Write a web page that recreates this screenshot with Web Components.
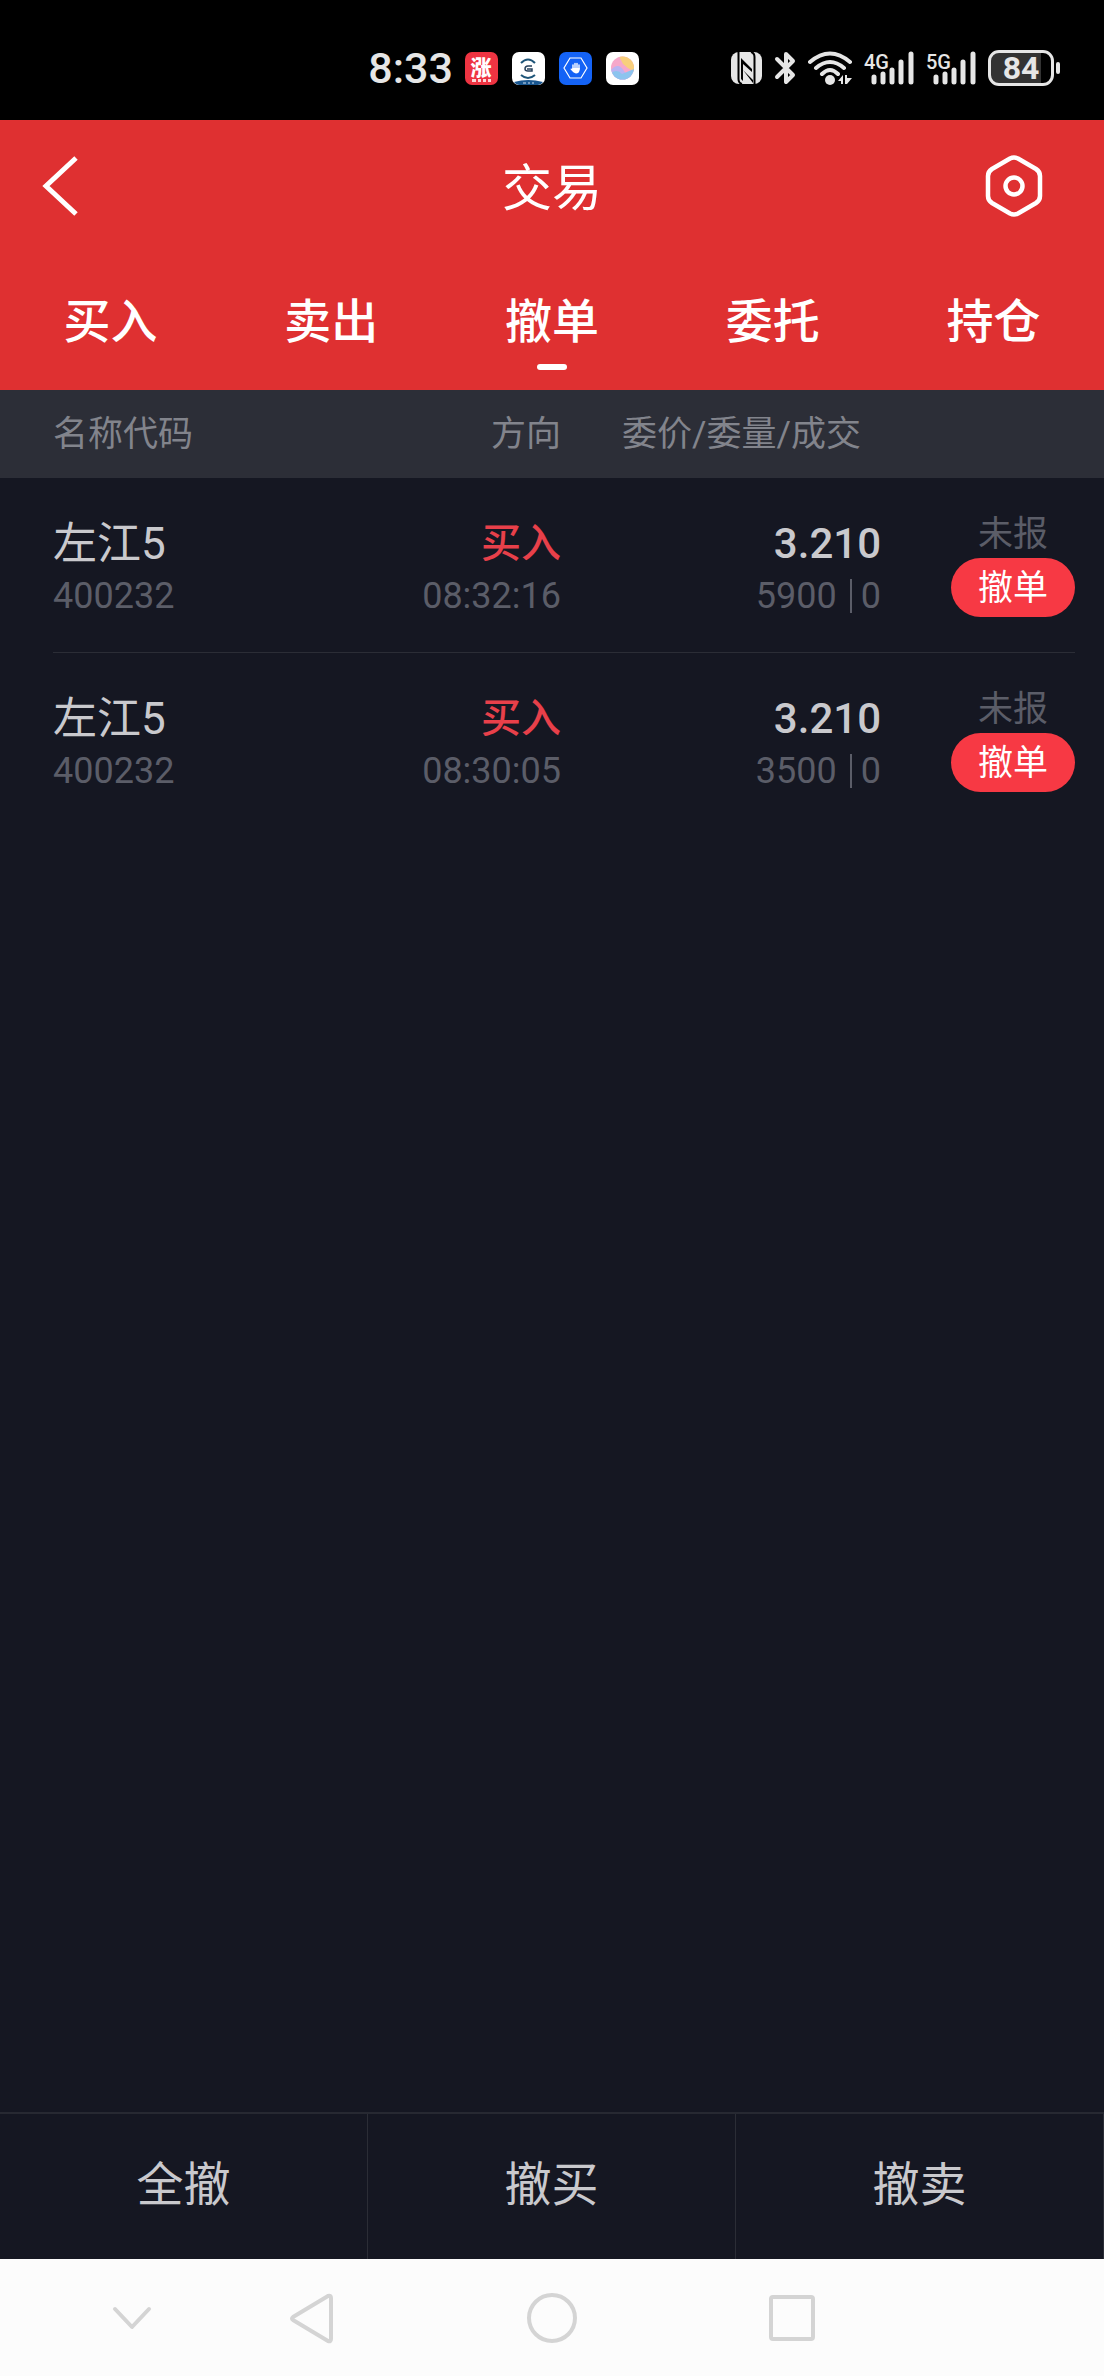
<!DOCTYPE html>
<html lang="zh-CN">
<head>
<meta charset="utf-8">
<meta name="viewport" content="width=device-width, initial-scale=1">
<title>交易</title>
<style>
  body {
    margin: 0;
    font-family: Roboto, "Noto Sans CJK SC", sans-serif;
    background: #151722;
  }
</style>
</head>
<body>
<trade-app></trade-app>

<script>
const define = (name, html, setup) => {
  const template = document.createElement('template')
  template.innerHTML = html
  customElements.define(name, class extends HTMLElement {
    constructor() {
      super()
      this.attachShadow({mode: 'open'}).append(template.content.cloneNode(true))
    }

    connectedCallback() {
      if (setup) setup(this, this.shadowRoot)
    }
  })
}

// Signal strength with the network generation above the short bars
define('signal-bars', `
  <style>
  :host { display: block; width: 50px; height: 36px; }
  svg { display: block; overflow: visible; }
  text { font: 500 20px Roboto, sans-serif; fill: #e6e6e6; }
  </style>
  <svg width="50" height="36" viewBox="0 0 50 36">
    <text x="0" y="19"></text>
    <path d="M10 27V32M19 24V32M28 20V32M37 12V32M47 4V32" stroke="#e6e6e6" stroke-width="5" stroke-linecap="round"/>
  </svg>
`, (host, root) => {
  root.querySelector('text').textContent = host.getAttribute('label')
})

define('status-bar', `
  <style>
  :host {
    display: flex;
    justify-content: flex-end;
    align-items: center;
    height: 120px;
    box-sizing: border-box;
    padding: 16px 44px 0 0;
    background: #000;
    color: #e6e6e6;
  }
  svg { display: block; }
  .left, .right { display: flex; align-items: center; }
  .left { gap: 14px; margin-right: 92px; }
  .right { gap: 12px; }
  .time { font-size: 43px; line-height: 48px; font-weight: 500; margin-right: -2px; }
  .battery { display: flex; align-items: center; gap: 2px; }
  .level {
    width: 66px;
    height: 36px;
    box-sizing: border-box;
    border: 3px solid #e6e6e6;
    border-radius: 11px;
    background: linear-gradient(90deg, #333 84%, #000 84%);
    font-size: 32px;
    line-height: 31px;
    font-weight: 700;
    text-align: center;
  }
  .nub { width: 4px; height: 12px; border-radius: 2px; background: #e6e6e6; }
  </style>
  <div class="left">
    <span class="time">8:33</span>
    <svg width="33" height="33" viewBox="0 0 33 33">
      <rect width="33" height="33" rx="7" fill="#ee3442"/>
      <text x="16" y="23" text-anchor="middle" font-size="21" font-weight="900" font-family="Noto Sans CJK SC, sans-serif" fill="#fff">涨</text>
      <path d="M7 27h4v3H7zM13 27h3v3h-3zM18 27h3v3h-3zM23 27h3v3h-3z" fill="#fff" opacity=".8"/>
    </svg>
    <svg width="33" height="33" viewBox="0 0 33 33">
      <rect width="33" height="33" rx="7" fill="#fff"/>
      <path d="M2 30Q16 26 31 30Q29 33 26 33H7Q4 33 2 30z" fill="#1a5790"/>
      <path d="M9 11Q16 4 23 11M9 23Q16 29 23 23" fill="none" stroke="#1e5579" stroke-width="2"/>
      <path d="M20 14H16Q13 14 13 17Q13 19 16 19H20V17H15" fill="none" stroke="#27415c" stroke-width="1.500"/>
      <path d="M11 31h3M16 31h2M20 31h2" stroke="#cfe0f0" stroke-width="1"/>
    </svg>
    <svg width="33" height="33" viewBox="0 0 33 33">
      <rect width="33" height="33" rx="7" fill="#1463f6"/>
      <path d="M11 6H22L28 16L22 26H11L5 16z" fill="none" stroke="#fff" stroke-width="1.200"/>
      <path d="M14 17V13M16 17V11.500M18 17V11.500M20 17V13" stroke="#fff" stroke-width="1.400" stroke-linecap="round"/>
      <path d="M13.300 16H20.700V18Q20 21.500 17 21.500Q14.500 21 11.300 17Q12 16 13.300 17z" fill="#fff"/>
    </svg>
    <svg width="33" height="33" viewBox="0 0 33 33">
      <defs>
        <clipPath id="ball"><circle cx="16.500" cy="16" r="11.500"/></clipPath>
      </defs>
      <rect width="33" height="33" rx="7" fill="#fff"/>
      <g clip-path="url(#ball)">
        <rect width="33" height="33" fill="#f6a8ca"/>
        <path d="M13 4Q30 2 29 20Q22 17 17 12z" fill="#f8cf7c"/>
        <path d="M4 19Q12 9 18 19T29 21V30H4z" fill="#b9b4f2"/>
        <path d="M4 22Q11 16 16 22L28 17V30H4z" fill="#8cc4ee"/>
      </g>
    </svg>
  </div>
  <div class="right">
    <svg width="31" height="34" viewBox="0 0 31 34">
      <rect y="1" width="31" height="32" rx="8" fill="#e6e6e6"/>
      <path d="M7.500 1V28Q7.500 32 11 33M20 1Q23.500 2 23.500 6V33" fill="none" stroke="#000" stroke-width="2"/>
      <path d="M10 7L21 18V21L12 13V30L10 28zM12 19L22 29V32z" fill="#000"/>
    </svg>
    <svg width="22" height="36" viewBox="0 0 22 36">
      <path d="M3 9L19 25L12 32V4L19 11L3 27" fill="none" stroke="#e6e6e6" stroke-width="4" stroke-linecap="round" stroke-linejoin="round"/>
    </svg>
    <svg width="44" height="36" viewBox="0 0 44 36">
      <path d="M2 12Q22 -5 42 12M8 18Q22 6 36 18M14 24Q22 16 30 24" fill="none" stroke="#e6e6e6" stroke-width="4" stroke-linecap="round"/>
      <circle cx="22" cy="30" r="5" fill="#e6e6e6"/>
      <path d="M30 31L35 25V34H33V31zM37 25H39V28H44L39 34H37z" fill="#e6e6e6"/>
    </svg>
    <signal-bars label="4G"></signal-bars>
    <signal-bars label="5G"></signal-bars>
    <div class="battery"><div class="level">84</div><div class="nub"></div></div>
  </div>
`)

define('page-header', `
  <style>
  :host {
    display: grid;
    grid-template-columns: 120px 1fr 120px;
    align-items: center;
    height: 132px;
    background: #df3031;
    color: #fff;
  }
  h1 { margin: 0; padding-top: 6px; font-size: 50px; line-height: 60px; font-weight: 400; text-align: center; }
  button {
    display: flex;
    justify-content: center;
    width: 120px;
    padding: 0;
    border: 0;
    background: none;
  }
  .settings { justify-self: end; width: 180px; }
  </style>
  <button aria-label="返回">
    <svg width="36" height="60" viewBox="0 0 36 60"><path d="M34 2L4 30L34 58" fill="none" stroke="#fff" stroke-width="5"/></svg>
  </button>
  <h1><slot></slot></h1>
  <button class="settings" aria-label="设置">
    <svg width="58" height="62" viewBox="0 0 58 62">
      <path d="M25 3.500Q29 1.500 33 3.500L51 14Q55 16.500 55 21V41Q55 45.500 51 48L33 58.500Q29 60.500 25 58.500L7 48Q3 45.500 3 41V21Q3 16.500 7 14z" fill="none" stroke="#fff" stroke-width="4.500"/>
      <circle cx="29" cy="31" r="8.500" fill="none" stroke="#fff" stroke-width="4.500"/>
    </svg>
  </button>
`)

define('trade-tab', `
  <style>
  :host { display: block; flex: 1; }
  button {
    display: flex;
    flex-direction: column;
    align-items: center;
    gap: 14px;
    width: 100%;
    padding: 0;
    border: 0;
    background: none;
    color: #fff;
    font: 500 47px/56px Roboto, "Noto Sans CJK SC", sans-serif;
  }
  button::after { content: ""; width: 30px; height: 6px; border-radius: 3px; }
  :host([current]) button::after { background: #fff; }
  </style>
  <button role="tab"><slot></slot></button>
`, (host, root) => {
  root.querySelector('button').setAttribute('aria-selected', host.hasAttribute('current'))
})

define('trade-tabs', `
  <style>
  :host { display: flex; padding: 42px 0 20px; background: #df3031; }
  </style>
  <slot></slot>
`)

define('order-table', `
  <style>
  :host { display: block; flex: 1; }
  table, thead, tbody { display: block; }
  tr { display: grid; grid-template-columns: 1fr 1fr 320px 194px; }
  th, td { padding: 0; font-weight: 400; text-align: right; }
  th:first-child, td:first-child { text-align: left; }
  thead { padding: 2px 29px 0 53px; background: #2c2e37; color: #82848c; }
  th { font-size: 35px; line-height: 86px; }
  th:nth-child(3) { padding-right: 20px; }
  tbody { margin: 0 29px 0 53px; }
  tbody tr { padding: 40px 0 30px; color: #c9c9cd; }
  tbody tr + tr { border-top: 1px solid #2b2d36; }
  td div { line-height: 52px; }
  .name { font-size: 44px; }
  .side { font-size: 40px; font-weight: 500; color: #e8404a; }
  .price { font-size: 42px; font-weight: 500; }
  .sub { font-size: 36px; color: #5b5d68; }
  .volume { display: flex; justify-content: flex-end; align-items: center; }
  .volume i { width: 2px; height: 34px; margin: 0 9px 0 13px; background: #5b5d68; }
  .action { display: flex; flex-direction: column; align-items: flex-end; gap: 6px; }
  .action div { width: 124px; font-size: 35px; line-height: 34px; text-align: center; color: #5b5d68; }
  .action button {
    width: 124px;
    height: 59px;
    padding: 2px 0 0;
    border: 0;
    border-radius: 30px;
    background: #f73944;
    color: #fff;
    font: 35px/56px Roboto, "Noto Sans CJK SC", sans-serif;
  }
  </style>
  <table>
    <thead><tr><th>名称代码</th><th>方向</th><th>委价/委量/成交</th><th></th></tr></thead>
    <tbody></tbody>
  </table>
`, (host, root) => {
  root.querySelector('tbody').innerHTML = host.orders.map(o => `
    <tr>
      <td><div class="name">${o.name}</div><div class="sub">${o.code}</div></td>
      <td><div class="side">${o.side}</div><div class="sub">${o.time}</div></td>
      <td><div class="price">${o.price}</div><div class="sub volume">${o.amount}<i></i>${o.filled}</div></td>
      <td class="action"><div>${o.state}</div><button>撤单</button></td>
    </tr>`).join('')
})

define('cancel-bar', `
  <style>
  :host { display: flex; border-top: 2px solid #272932; }
  button {
    flex: 1;
    height: 145px;
    padding: 0 0 4px;
    border: 0;
    border-right: 1px solid #2b2d36;
    background: none;
    color: #c9c9cd;
    font: 47px/56px Roboto, "Noto Sans CJK SC", sans-serif;
  }
  </style>
  <button>全撤</button>
  <button>撤买</button>
  <button>撤卖</button>
`)

define('system-nav', `
  <style>
  :host {
    display: grid;
    grid-template-columns: 120px repeat(3, 240px);
    justify-content: center;
    height: 117px;
    padding-right: 120px;
    background: #fcfcfc;
  }
  button { display: flex; justify-content: center; align-items: center; padding: 0; border: 0; background: none; }
  svg { fill: none; stroke: #d4d4d4; stroke-width: 4; stroke-linecap: round; stroke-linejoin: round; }
  </style>
  <button aria-label="收起"><svg width="40" height="52" viewBox="0 0 40 52"><path d="M3 17L20 35L37 17"/></svg></button>
  <button aria-label="后退"><svg width="44" height="52" viewBox="0 0 44 52"><path d="M3 25L38 4Q41 3 41 6V47Q41 50 38 49L3 28Q1 26.500 3 25z"/></svg></button>
  <button aria-label="主屏幕"><svg width="52" height="52" viewBox="0 0 52 52"><circle cx="26" cy="26" r="23"/></svg></button>
  <button aria-label="最近任务"><svg width="48" height="52" viewBox="0 0 48 52"><rect x="3" y="5" width="42" height="42" rx="2"/></svg></button>
`)

customElements.get('order-table').prototype.orders = [
  {name: '左江5', code: '400232', side: '买入', time: '08:32:16', price: '3.210', amount: 5900, filled: 0, state: '未报'},
  {name: '左江5', code: '400232', side: '买入', time: '08:30:05', price: '3.210', amount: 3500, filled: 0, state: '未报'}
]

define('trade-app', `
  <style>
  :host { display: flex; flex-direction: column; min-height: 100vh; }
  </style>
  <status-bar></status-bar>
  <page-header>交易</page-header>
  <trade-tabs role="tablist">
    <trade-tab>买入</trade-tab>
    <trade-tab>卖出</trade-tab>
    <trade-tab current>撤单</trade-tab>
    <trade-tab>委托</trade-tab>
    <trade-tab>持仓</trade-tab>
  </trade-tabs>
  <order-table></order-table>
  <cancel-bar></cancel-bar>
  <system-nav></system-nav>
`)
</script>
</body>
</html>
